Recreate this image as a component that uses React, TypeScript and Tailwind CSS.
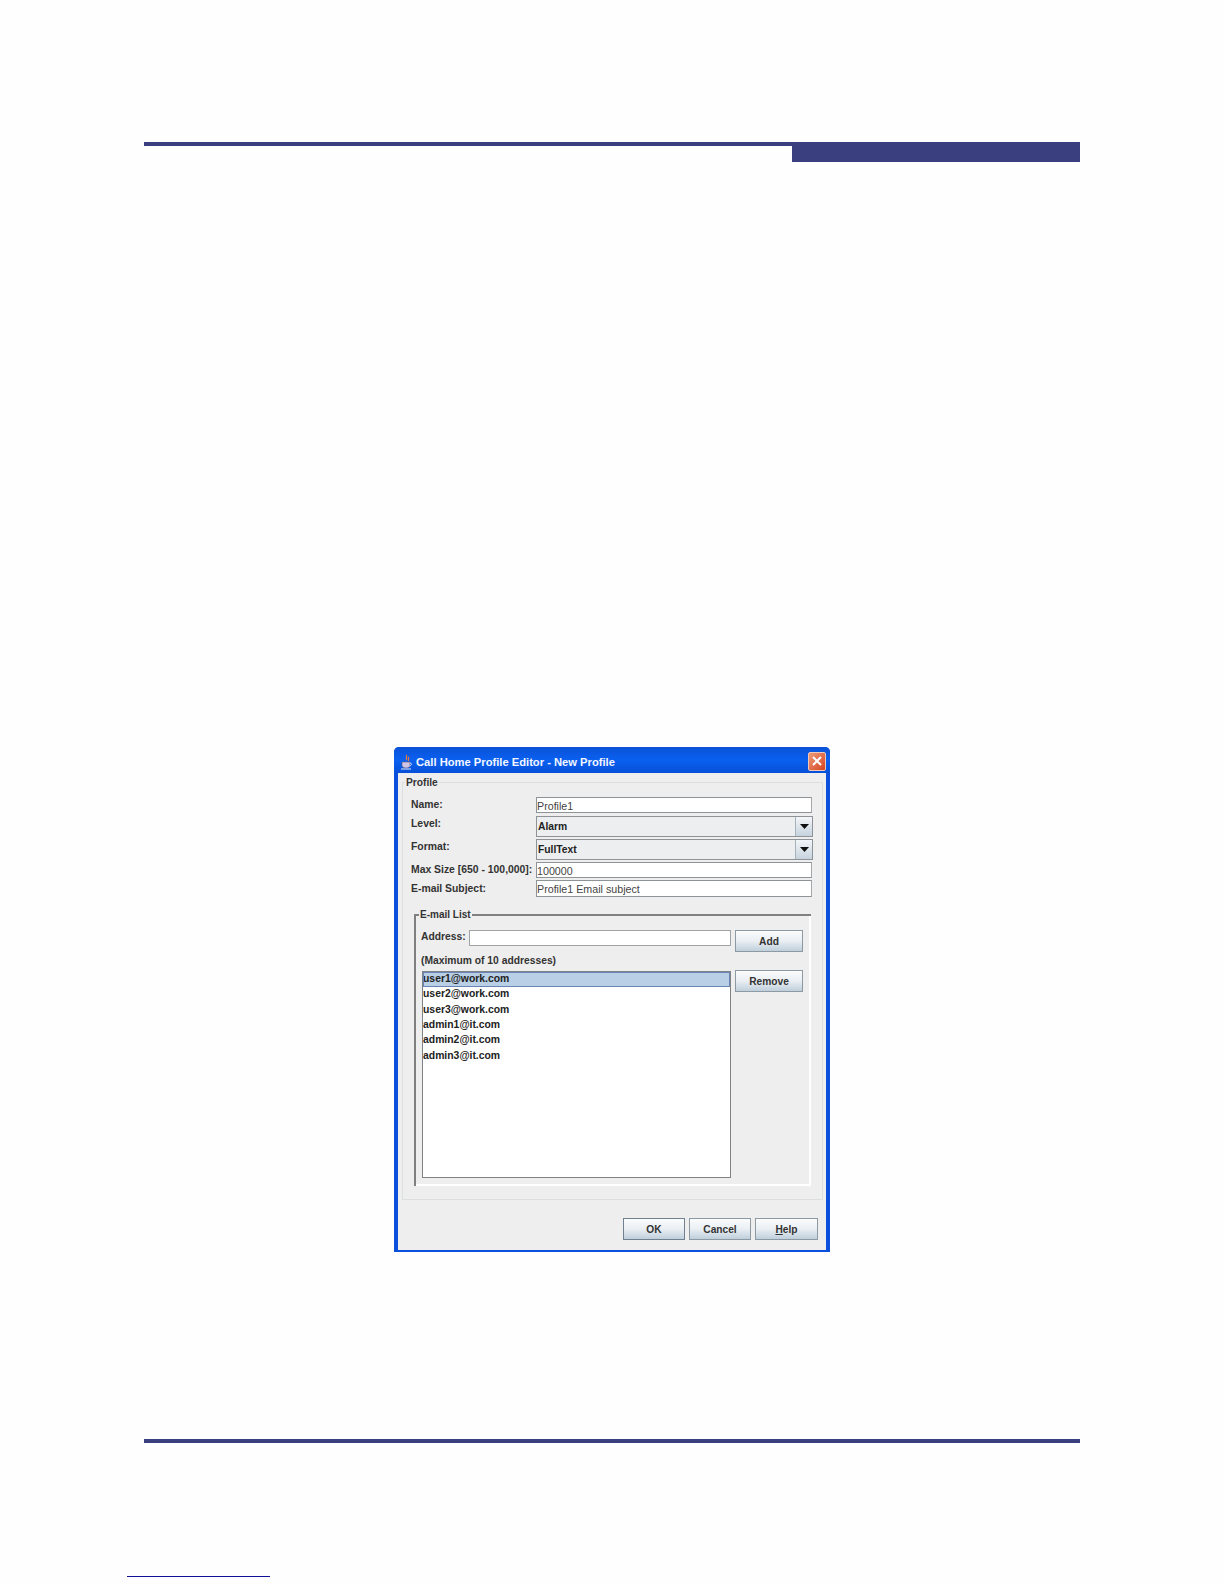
import { FC, ReactNode } from 'react'

const FONT = "font-['Liberation_Sans',Arial,sans-serif]"

const Field: FC<{ top: string; height: string; children: ReactNode }> = ({ top, height, children }) => (
  <div className={`flex items-center ${top} ${height}`}>{children}</div>
)

function TextInput({ value, className }: { value?: string; className?: string }) {
  return (
    <div
      className={`flex h-full items-center border border-[#8e9398] border-r-[#a5a8ab] bg-white pt-[2px] text-[10.700px] text-[#444] ${className ?? ''}`}
    >
      {value}
    </div>
  )
}

function Combo({ value }: { value: string }) {
  return (
    <div className="flex h-full w-[277px] border border-[#8e9398] bg-[#eceeef]">
      <div className="flex flex-1 items-center pl-[1px] text-[10.300px] font-bold text-[#222]">{value}</div>
      <div className="flex w-[17px] items-center justify-center border-l border-[#a9b3bb] bg-gradient-to-b from-[#f4f6f8] to-[#c6d3de]">
        <svg width="9" height="5" viewBox="0 0 9 5">
          <path d="M0 0h9L4.5 5z" fill="#111" />
        </svg>
      </div>
    </div>
  )
}

function JButton({ label, width, focus, children }: { label?: string; width: string; focus?: boolean; children?: ReactNode }) {
  return (
    <div
      className={`flex h-[22px] items-center justify-center border bg-gradient-to-b from-[#fbfcfd] via-[#eaeff3] to-[#bfcfdc] pt-[2px] text-[10.200px] font-bold text-[#333] ${width} ${focus ? 'border-[#71818f]' : 'border-[#8d99a3]'}`}
    >
      {label ?? children}
    </div>
  )
}

const emails = ['user1@work.com', 'user2@work.com', 'user3@work.com', 'admin1@it.com', 'admin2@it.com', 'admin3@it.com']

const labelClass = 'w-[128px] pl-[3px] text-[10.400px] font-bold text-[#333] whitespace-nowrap'

export default function App() {
  return (
    <div className={`flex h-[1584px] w-[1224px] flex-col bg-[#fefefe] ${FONT}`}>
      {/* Running header */}
      <div className="mt-[142px] ml-[144px] flex h-[20px] w-[936px] items-start">
        <div className="h-1 flex-1 bg-[#3a3f7f]" />
        <div className="h-[20px] w-[288px] bg-[#3a3f7f]" />
      </div>

      {/* Dialog */}
      <div className="mt-[585px] ml-[394px] flex h-[505px] w-[436px] flex-col rounded-t-[5px] bg-[#0a50dc]">
        <div className="flex h-[26px] shrink-0 items-center rounded-t-[5px] bg-gradient-to-b from-[#0a52d8] via-[#0a60f0] to-[#0650d8] pt-[2px] pr-[4px] pl-[6px]">
          <svg width="13" height="16" viewBox="0 0 13 16" className="mt-[2px] shrink-0">
            <path d="M7 1C5 3 8 4 6 6M9 3C7.500 4.500 9.500 5 8 7" stroke="#e8783a" strokeWidth="1.200" fill="none" />
            <path d="M2 8h8v3c0 2-1.500 3-4 3s-4-1-4-3z" fill="#cfc4e6" stroke="#6a5a80" strokeWidth=".6" />
            <path d="M10 9c2 0 2 2.500-.5 3" stroke="#dfe6f5" fill="none" />
            <path d="M1 15h10" stroke="#e8e8f4" strokeWidth="1" />
          </svg>
          <span className="mt-[3px] ml-[3px] flex-1 text-[11.200px] font-bold whitespace-nowrap text-[#f4f6ff]">
            Call Home Profile Editor - New Profile
          </span>
          <div className="flex h-[19px] w-[18px] items-center justify-center rounded-[2px] border border-[#f0c8b8] bg-gradient-to-br from-[#ec9a78] to-[#d4401c]">
            <svg width="10" height="10" viewBox="0 0 10 10">
              <path d="M1 1l8 8M9 1l-8 8" stroke="#fff" strokeWidth="2" />
            </svg>
          </div>
        </div>

        <div className="mx-[4px] mb-[2px] flex flex-1 flex-col bg-[#eeeeee] pt-[9px] pr-[3px] pl-[4px]">
          {/* Profile group */}
          <div className="relative h-[418px] border border-[#dcdfe0] pt-[14px] pl-[5px]">
            <span className="absolute -top-[8px] left-[2px] bg-[#eeeeee] px-px text-[10.200px] font-bold text-[#333]">
              Profile
            </span>
            <Field top="" height="h-[16px]">
              <div className={`${labelClass} -mt-[1px]`}>Name:</div>
              <TextInput value="Profile1" className="w-[276px]" />
            </Field>
            <Field top="mt-[3px]" height="h-[21px]">
              <div className={`${labelClass} -mt-[6px]`}>Level:</div>
              <Combo value="Alarm" />
            </Field>
            <Field top="mt-[2px]" height="h-[21px]">
              <div className={`${labelClass} -mt-[6px]`}>Format:</div>
              <Combo value="FullText" />
            </Field>
            <Field top="mt-[2px]" height="h-[16px]">
              <div className={`${labelClass} -mt-[1px]`}>Max Size [650 - 100,000]:</div>
              <TextInput value="100000" className="w-[276px]" />
            </Field>
            <Field top="mt-[2px]" height="h-[17px]">
              <div className={labelClass}>E-mail Subject:</div>
              <TextInput value="Profile1 Email subject" className="w-[276px]" />
            </Field>

            {/* E-mail list group */}
            <div className="relative mt-[17px] ml-[6px] h-[272px] w-[397px] border-t-2 border-l-2 border-[#808080] pt-[14px] pl-[6px]">
              <div className="absolute inset-0 border-r-2 border-b-2 border-white" />
              <span className="absolute -top-[9px] left-[3px] bg-[#eeeeee] px-px text-[10px] font-bold text-[#333]">
                E-mail List
              </span>
              <div className="relative flex gap-[4px]">
                <div className="w-[309px]">
                  <div className="flex h-[16px] items-center">
                    <span className="-mt-[3px] -ml-px w-[48px] text-[10.300px] font-bold whitespace-nowrap text-[#333]">Address:</span>
                    <div className="h-full flex-1 border border-[#a0a3a6] bg-white" />
                  </div>
                  <div className="mt-[7px] -ml-px text-[10.300px] leading-[16px] font-bold whitespace-nowrap text-[#333]">
                    (Maximum of 10 addresses)
                  </div>
                  <div className="mt-[2px] h-[207px] border border-[#7f8285] bg-white">
                    {emails.map((email, i) => (
                      <div
                        key={email}
                        className={`flex h-[15.400px] items-center pb-[2px] text-[10.400px] font-bold text-[#222] ${i === 0 ? 'bg-[#b8cfe5] outline outline-1 -outline-offset-1 outline-[#6a85b5]' : ''}`}
                      >
                        {email}
                      </div>
                    ))}
                  </div>
                </div>
                <div className="flex flex-col gap-[18px]">
                  <JButton label="Add" width="w-[68px]" />
                  <JButton label="Remove" width="w-[68px]" />
                </div>
              </div>
            </div>
          </div>

          {/* Footer buttons */}
          <div className="mt-[18px] flex justify-end gap-[4px] pr-[5px]">
            <JButton label="OK" width="w-[62px]" focus />
            <JButton label="Cancel" width="w-[62px]" />
            <JButton width="w-[63px]">
              <span>
                <span className="underline">H</span>elp
              </span>
            </JButton>
          </div>
        </div>
      </div>

      {/* Running footer */}
      <div className="mt-[187px] ml-[144px] h-1 w-[936px] bg-[#3a3f7f]" />
      <div className="mt-[133px] ml-[127px] h-px w-[143px] bg-[#10109a]" />
    </div>
  )
}
